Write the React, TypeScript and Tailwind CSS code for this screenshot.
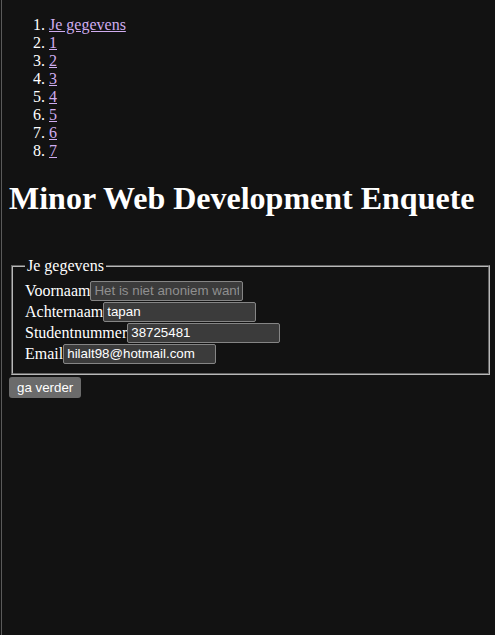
import React from "react";

const serif = { fontFamily: '"Liberation Serif", "Times New Roman", serif' };

function Row({ label, value, placeholder }: { label: string; value?: string; placeholder?: string }) {
  return (
    <div className="flex h-[21px] items-center">
      <label className="text-[16px] leading-[18px] text-white">{label}</label>
      <input
        readOnly
        defaultValue={value}
        placeholder={placeholder}
        className="box-border h-[20px] w-[153px] rounded-[2px] border border-[#858585] bg-[#3b3b3b] px-[3px] text-[13.33px] text-white outline-none placeholder:text-[#8f8f8f] [font-family:'Liberation_Sans',Arial,sans-serif]"
      />
    </div>
  );
}

export default function App() {
  const items = ["Je gegevens", "1", "2", "3", "4", "5", "6", "7"];
  return (
    <div className="min-h-[635px] bg-[#121212] pl-px" style={serif}>
      <div className="min-h-[635px] border-l border-[#5a5a5a] pl-[7px] pr-[3px] pt-4 text-white">
        <ol className="list-decimal pl-10 text-[16px] leading-[18px] marker:text-white">
          {items.map((t) => (
            <li key={t}>
              <a href="#" className="text-[#d0adf0] underline">
                {t}
              </a>
            </li>
          ))}
        </ol>
        <h1 className="mt-[20px] text-[32px] font-bold leading-[37px]">Minor Web Development Enquete</h1>
        <form className="mt-[40px]">
          <fieldset className="mx-[2px] border-2 border-[#b8b8b8] px-3 pb-[9px] pt-[5px] [border-style:groove]">
            <legend className="px-[2px] text-[16px] leading-[18px]">Je gegevens</legend>
            <Row label="Voornaam" placeholder="Het is niet anoniem want" />
            <Row label="Achternaam" value="tapan" />
            <Row label="Studentnummer" value="38725481" />
            <Row label="Email" value="hilalt98@hotmail.com" />
          </fieldset>
          <button
            type="button"
            className="h-[21px] rounded-[3px] bg-[#6b6b6b] px-[8px] text-[13.33px] leading-[21px] text-white [font-family:'Liberation_Sans',Arial,sans-serif]"
          >
            ga verder
          </button>
        </form>
      </div>
    </div>
  );
}
